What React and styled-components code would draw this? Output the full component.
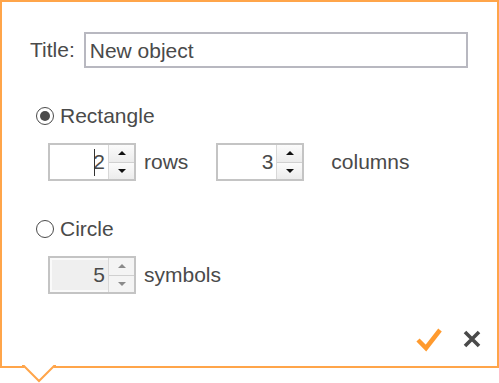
import React from "react";
import styled, { createGlobalStyle } from "styled-components";

const GlobalStyle = createGlobalStyle`
  html, body { margin: 0; padding: 0; background: #ffffff; }
  body { font-family: "Liberation Sans", Arial, sans-serif; color: #4a4a4a; min-height: 383px; }
`;

const Stage = styled.div`
  position: relative;
  width: 499px;
  height: 383px;
`;

const Popup = styled.div`
  position: relative;
  box-sizing: border-box;
  width: 499px;
  height: 368px;
  border: 2px solid #ffa54a;
  background: #fff;
  padding: 30px 0 0 28px;
  display: flex;
  flex-direction: column;
`;

const Pointer = styled.svg`
  position: absolute;
  left: 22px;
  top: 365px;
  width: 34px;
  height: 17px;
  overflow: visible;
`;

const TitleRow = styled.div`
  display: flex;
  align-items: center;
  gap: 9px;
`;

const Label = styled.span`
  font-size: 21px;
  line-height: 24px;
  color: #4a4a4a;
`;

const TextBox = styled.div`
  box-sizing: border-box;
  width: 384px;
  height: 36px;
  border: 2px solid #b8b8c0;
  padding: 0 4px;
  font-size: 21px;
  line-height: 33px;
  color: #4a4a4a;
`;

const Option = styled.div`
  display: flex;
  flex-direction: column;
  margin-top: ${(p) => p.$top}px;
  padding-left: 6px;
`;

const RadioRow = styled.div`
  display: flex;
  align-items: center;
  gap: 6px;
  height: 24px;
`;

const Radio = styled.span`
  box-sizing: border-box;
  width: 18px;
  height: 18px;
  border-radius: 50%;
  border: 1.5px solid #4a4a4a;
  display: flex;
  align-items: center;
  justify-content: center;
  &::after {
    content: "";
    width: 10px;
    height: 10px;
    border-radius: 50%;
    background: #4a4a4a;
    display: ${(p) => (p.$checked ? "block" : "none")};
  }
`;

const SpinRow = styled.div`
  display: flex;
  align-items: center;
  margin-top: 15px;
  padding-left: 12px;
`;

const Spinner = styled.div`
  box-sizing: border-box;
  width: 88px;
  height: 38px;
  border: 2px solid #c4c4c4;
  display: flex;
  background: ${(p) => (p.$disabled ? "#efefef" : "#fff")};
`;

const SpinValue = styled.div`
  flex: 1;
  display: flex;
  align-items: center;
  justify-content: flex-end;
  padding-right: 3px;
  font-size: 21px;
  color: #4a4a4a;
  border: ${(p) => (p.$disabled ? "2px solid #fafafa" : "none")};
  border-right: none;
`;

const Caret = styled.span`
  display: inline-block;
  width: 1.5px;
  height: 27px;
  background: #333;
  position: relative;
  left: 2px;
`;

const Buttons = styled.div`
  width: 25px;
  display: flex;
  flex-direction: column;
  border-left: 1px solid #d8d8d8;
`;

const SpinBtn = styled.div`
  flex: 1;
  display: flex;
  align-items: center;
  justify-content: center;
  background: ${(p) => (p.$disabled ? "#f4f4f4" : "linear-gradient(#fbfbfb, #ececec)")};
  border-top: ${(p) => (p.$lower ? "1px solid #d0d0d0" : "none")};
  &::after {
    content: "";
    width: 0;
    height: 0;
    border-left: 4px solid transparent;
    border-right: 4px solid transparent;
    ${(p) =>
      p.$lower
        ? `border-top: 4px solid ${p.$disabled ? "#8a8a8a" : "#111"};`
        : `border-bottom: 4px solid ${p.$disabled ? "#8a8a8a" : "#111"};`}
  }
`;

const Unit = styled.span`
  font-size: 21px;
  color: #4a4a4a;
  margin-left: ${(p) => p.$gap}px;
  margin-right: ${(p) => p.$after || 0}px;
`;

const Footer = styled.div`
  margin-top: auto;
  display: flex;
  justify-content: flex-end;
  align-items: center;
  gap: 19px;
  padding: 0 16px 14px 0;
`;

const IconBtn = styled.svg`
  display: block;
`;

function Spin({ value, disabled, caret }) {
  return (
    <Spinner $disabled={disabled}>
      <SpinValue $disabled={disabled}>
        {caret && <Caret />}
        {value}
      </SpinValue>
      <Buttons>
        <SpinBtn $disabled={disabled} />
        <SpinBtn $disabled={disabled} $lower />
      </Buttons>
    </Spinner>
  );
}

export default function App() {
  return (
    <>
      <GlobalStyle />
      <Stage>
        <Popup>
          <TitleRow>
            <Label>Title:</Label>
            <TextBox>New object</TextBox>
          </TitleRow>

          <Option $top={36}>
            <RadioRow>
              <Radio $checked />
              <Label>Rectangle</Label>
            </RadioRow>
            <SpinRow>
              <Spin value="2" caret />
              <Unit $gap={8} $after={28}>rows</Unit>
              <Spin value="3" />
              <Unit $gap={27}>columns</Unit>
            </SpinRow>
          </Option>

          <Option $top={36}>
            <RadioRow>
              <Radio />
              <Label>Circle</Label>
            </RadioRow>
            <SpinRow>
              <Spin value="5" disabled />
              <Unit $gap={8}>symbols</Unit>
            </SpinRow>
          </Option>

          <Footer>
            <IconBtn width="28" height="26" viewBox="0 0 28 26">
              <path d="M2 14 L10 22 L24 4" fill="none" stroke="#ff9a2e" strokeWidth="4.5" strokeLinecap="butt" strokeLinejoin="miter" />
            </IconBtn>
            <IconBtn width="18" height="18" viewBox="0 0 18 18">
              <path d="M2 2 L16 16 M16 2 L2 16" stroke="#4a4a4a" strokeWidth="3.6" />
            </IconBtn>
          </Footer>
        </Popup>
        <Pointer viewBox="0 0 34 17">
          <polygon points="0,0 17,16 34,0" fill="#fff" />
          <polyline points="0,1 2,1 17,16 32,1 34,1" fill="none" stroke="#ffa54a" strokeWidth="2" />
        </Pointer>
      </Stage>
    </>
  );
}
